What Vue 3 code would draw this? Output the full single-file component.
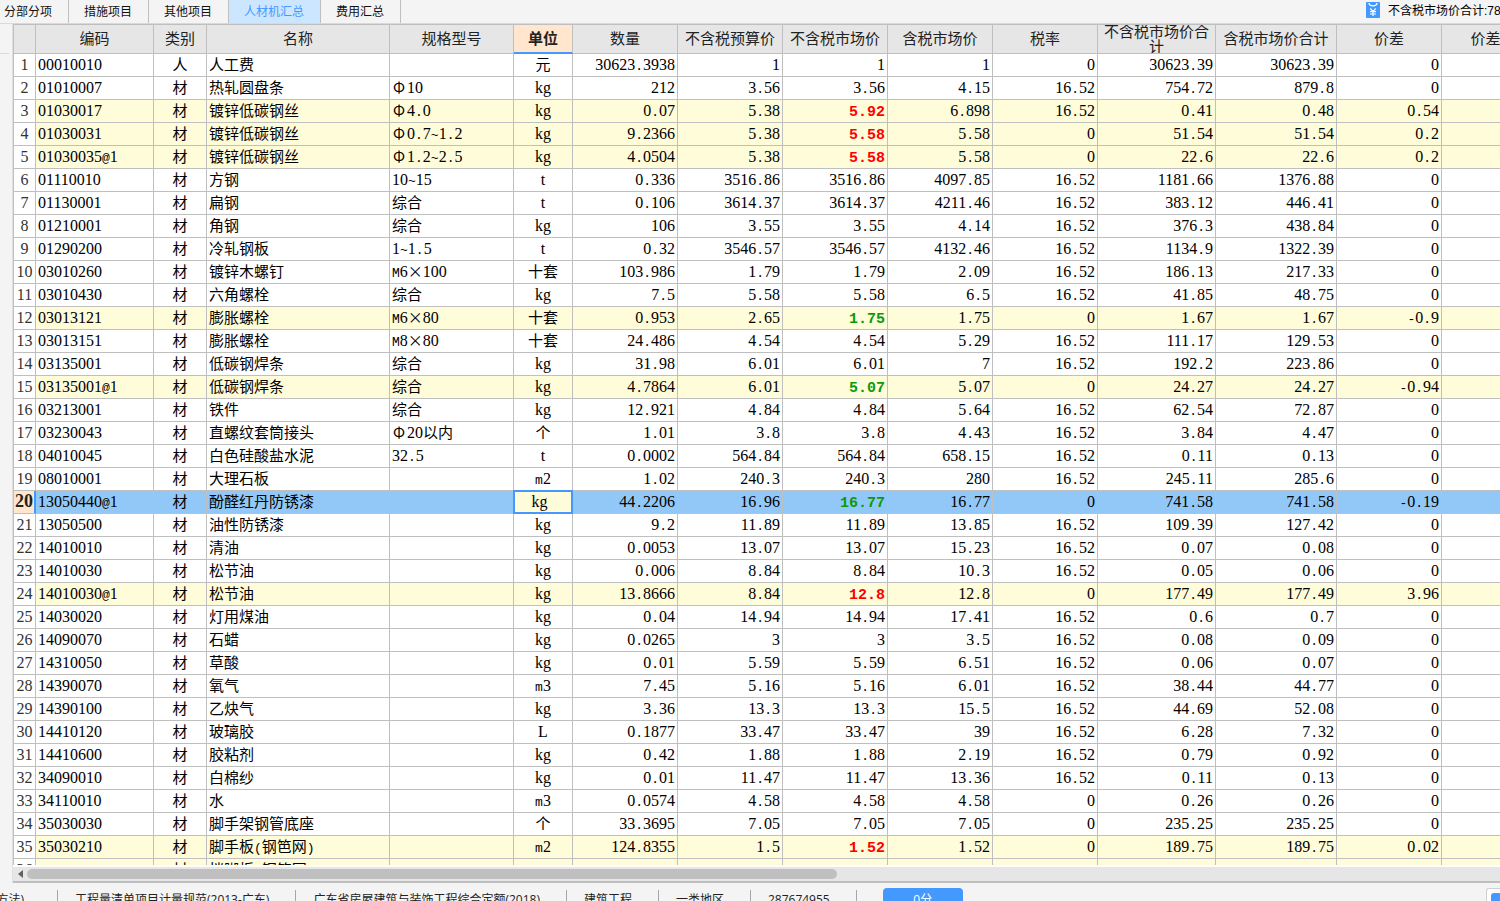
<script setup>
import { ref } from 'vue'

const tabs = ['分部分项', '措施项目', '其他项目', '人材机汇总', '费用汇总']
const activeTab = ref('人材机汇总')
const unit = ref('kg')

const columns = [
  { key: 'no', label: '', cls: 'c-no' },
  { key: 'code', label: '编码', cls: 'c-code' },
  { key: 'kind', label: '类别', cls: 'c-kind' },
  { key: 'name', label: '名称', cls: 'c-name' },
  { key: 'spec', label: '规格型号', cls: 'c-spec' },
  { key: 'unit', label: '单位', cls: 'c-unit' },
  { key: 'qty', label: '数量', cls: 'c-num' },
  { key: 'budget', label: '不含税预算价', cls: 'c-num' },
  { key: 'market', label: '不含税市场价', cls: 'c-num' },
  { key: 'taxed', label: '含税市场价', cls: 'c-num' },
  { key: 'rate', label: '税率', cls: 'c-num' },
  { key: 'total', label: '不含税市场价合计', cls: 'c-total' },
  { key: 'taxedTotal', label: '含税市场价合计', cls: 'c-taxed-total' },
  { key: 'diff', label: '价差', cls: 'c-num' },
  { key: 'diffTotal', label: '价差合计', cls: 'c-total' },
]

const source = `00010010|人|人工费||元|30623.3938|1|1|1|0|30623.39|30623.39|0
01010007|材|热轧圆盘条|Φ10|kg|212|3.56|3.56|4.15|16.52|754.72|879.8|0
01030017|材|镀锌低碳钢丝|Φ4.0|kg|0.07|5.38|5.92|6.898|16.52|0.41|0.48|0.54
01030031|材|镀锌低碳钢丝|Φ0.7~1.2|kg|9.2366|5.38|5.58|5.58|0|51.54|51.54|0.2
01030035@1|材|镀锌低碳钢丝|Φ1.2~2.5|kg|4.0504|5.38|5.58|5.58|0|22.6|22.6|0.2
01110010|材|方钢|10~15|t|0.336|3516.86|3516.86|4097.85|16.52|1181.66|1376.88|0
01130001|材|扁钢|综合|t|0.106|3614.37|3614.37|4211.46|16.52|383.12|446.41|0
01210001|材|角钢|综合|kg|106|3.55|3.55|4.14|16.52|376.3|438.84|0
01290200|材|冷轧钢板|1~1.5|t|0.32|3546.57|3546.57|4132.46|16.52|1134.9|1322.39|0
03010260|材|镀锌木螺钉|M6×100|十套|103.986|1.79|1.79|2.09|16.52|186.13|217.33|0
03010430|材|六角螺栓|综合|kg|7.5|5.58|5.58|6.5|16.52|41.85|48.75|0
03013121|材|膨胀螺栓|M6×80|十套|0.953|2.65|1.75|1.75|0|1.67|1.67|-0.9
03013151|材|膨胀螺栓|M8×80|十套|24.486|4.54|4.54|5.29|16.52|111.17|129.53|0
03135001|材|低碳钢焊条|综合|kg|31.98|6.01|6.01|7|16.52|192.2|223.86|0
03135001@1|材|低碳钢焊条|综合|kg|4.7864|6.01|5.07|5.07|0|24.27|24.27|-0.94
03213001|材|铁件|综合|kg|12.921|4.84|4.84|5.64|16.52|62.54|72.87|0
03230043|材|直螺纹套筒接头|Φ20以内|个|1.01|3.8|3.8|4.43|16.52|3.84|4.47|0
04010045|材|白色硅酸盐水泥|32.5|t|0.0002|564.84|564.84|658.15|16.52|0.11|0.13|0
08010001|材|大理石板||m2|1.02|240.3|240.3|280|16.52|245.11|285.6|0
13050440@1|材|酚醛红丹防锈漆||kg|44.2206|16.96|16.77|16.77|0|741.58|741.58|-0.19
13050500|材|油性防锈漆||kg|9.2|11.89|11.89|13.85|16.52|109.39|127.42|0
14010010|材|清油||kg|0.0053|13.07|13.07|15.23|16.52|0.07|0.08|0
14010030|材|松节油||kg|0.006|8.84|8.84|10.3|16.52|0.05|0.06|0
14010030@1|材|松节油||kg|13.8666|8.84|12.8|12.8|0|177.49|177.49|3.96
14030020|材|灯用煤油||kg|0.04|14.94|14.94|17.41|16.52|0.6|0.7|0
14090070|材|石蜡||kg|0.0265|3|3|3.5|16.52|0.08|0.09|0
14310050|材|草酸||kg|0.01|5.59|5.59|6.51|16.52|0.06|0.07|0
14390070|材|氧气||m3|7.45|5.16|5.16|6.01|16.52|38.44|44.77|0
14390100|材|乙炔气||kg|3.36|13.3|13.3|15.5|16.52|44.69|52.08|0
14410120|材|玻璃胶||L|0.1877|33.47|33.47|39|16.52|6.28|7.32|0
14410600|材|胶粘剂||kg|0.42|1.88|1.88|2.19|16.52|0.79|0.92|0
34090010|材|白棉纱||kg|0.01|11.47|11.47|13.36|16.52|0.11|0.13|0
34110010|材|水||m3|0.0574|4.58|4.58|4.58|0|0.26|0.26|0
35030030|材|脚手架钢管底座||个|33.3695|7.05|7.05|7.05|0|235.25|235.25|0
35030210|材|脚手板(钢笆网)||m2|124.8355|1.5|1.52|1.52|0|189.75|189.75|0.02
|材|挡脚板(钢笆网)||||||||||`

const dataKeys = columns.slice(1, -1).map((c) => c.key)
const rows = source.split('\n').map((line, i) => {
  const row = { no: String(i + 1), diffTotal: '' }
  line.split('|').forEach((value, k) => {
    row[dataKeys[k]] = value
  })
  row.changed = row.diff !== '0'
  row.current = i === 19
  return row
})

// Splits a value into runs so that digits, symbols and Han text each get their own face.
function runs(text) {
  const parts = text.match(/Φ|[.~@Mm()-]+|[0-9a-zA-Z]+|[^0-9a-zA-Z.~@()Φ-]+/g) || []
  return parts.map((t) => ({
    text: t,
    cls: t === 'Φ' ? 'phi' : /^[.~@Mm()-]/.test(t) ? 'sym' : /^[0-9a-zA-Z]/.test(t) ? 'num' : 'han',
  }))
}

function cellClass(col, row) {
  return [
    col.cls,
    {
      up: col.key === 'market' && Number(row.diff) > 0,
      down: col.key === 'market' && Number(row.diff) < 0,
      editing: col.key === 'unit' && row.current,
    },
  ]
}

const status = [
  '工程量清单项目计量规范(2013-广东)',
  '广东省房屋建筑与装饰工程综合定额(2018)',
  '建筑工程',
  '一类地区',
  '287674955',
]
</script>

<template>
  <div class="app">
    <header class="topbar">
      <nav class="tabs">
        <button
          v-for="t in tabs"
          :key="t"
          type="button"
          class="tab"
          :class="{ active: t === activeTab }"
          @click="activeTab = t"
        >{{ t }}</button>
      </nav>
      <div class="summary">
        <svg class="summary-icon" viewBox="0 0 14 16" aria-hidden="true">
          <rect width="14" height="16" rx="1" fill="#4499ff" />
          <path d="M3 1C3.4 4.8 10.6 4.8 11 1" fill="none" stroke="#fff" stroke-width="1.4" />
          <path d="M4.2 6.5L7 9.3L9.8 6.5M7 9.3V14M4 9.7h6M4 12h6" fill="none" stroke="#fff" stroke-width="1.2" />
        </svg>
        <span class="summary-text">不含税市场价合计:787143.26</span>
      </div>
    </header>

    <main class="body">
      <aside class="rail"><div class="rail-head"></div></aside>
      <section class="panel">
        <div class="grid">
          <table>
            <colgroup>
              <col v-for="c in columns" :key="c.key" :class="c.cls" />
            </colgroup>
            <thead>
              <tr>
                <th v-for="c in columns" :key="c.key" scope="col" :class="{ picked: c.key === 'unit' }">
                  <div class="th-text">{{ c.label }}</div>
                </th>
              </tr>
            </thead>
            <tbody>
              <tr v-for="row in rows" :key="row.no" :class="{ changed: row.changed, current: row.current }">
                <td v-for="c in columns" :key="c.key" :class="cellClass(c, row)">
                  <input v-if="c.key === 'unit' && row.current" v-model="unit" class="editor" type="text" aria-label="单位" />
                  <div v-else class="cell"><span v-for="(r, k) in runs(row[c.key])" :key="k" :class="r.cls">{{ r.text }}</span></div>
                </td>
              </tr>
            </tbody>
          </table>
        </div>
        <div class="scroll">
          <svg class="scroll-arrow" viewBox="0 0 5 8" aria-hidden="true"><path d="M5 0v8L0 4z" fill="#606060" /></svg>
          <div class="track"><div class="thumb"></div></div>
        </div>
      </section>
    </main>

    <footer class="status">
      <span class="item lead">方法)</span>
      <span v-for="s in status" :key="s" class="item">{{ s }}</span>
      <button type="button" class="score">0分</button>
      <div class="chat"><div class="chat-mark"></div></div>
    </footer>
  </div>
</template>

<style>
body {
  margin: 0;
  overflow: hidden;
}
</style>

<style scoped>
.app {
  display: flex;
  flex-direction: column;
  height: 100vh;
  overflow: hidden;
  background: #f4f4f4;
  color: #000;
  font-family: "Open Sans", "Noto Sans CJK SC", sans-serif;
  font-size: 12px;
}
.topbar {
  display: flex;
  flex: none;
  justify-content: space-between;
  height: 23px;
  border-bottom: 1px solid #d9d9d9;
}
.tabs {
  display: flex;
}
.tab {
  box-sizing: border-box;
  height: 23px;
  padding: 1px 16px 0 15px;
  border: 0;
  border-right: 1px solid #bfbfbf;
  background: transparent;
  color: #111;
  font: inherit;
  line-height: 22px;
}
.tab:first-child {
  padding-left: 4px;
}
.tab.active {
  padding-top: 0;
  background: #cce6ff;
  color: #4499ff;
}
.summary {
  display: flex;
  gap: 8px;
  width: 134px;
  overflow: hidden;
  white-space: nowrap;
  line-height: 23px;
  font-family: "Liberation Sans", "Noto Sans CJK SC", sans-serif;
}
.summary-icon {
  flex: none;
  width: 14px;
  height: 16px;
  margin-top: 2px;
}
.body {
  display: flex;
  flex: 1;
  min-height: 0;
}
.rail {
  flex: none;
  width: 12px;
  border-right: 1px solid #e0e0e0;
}
.rail-head {
  width: 9px;
  height: 29px;
  border-bottom: 1px solid #d9d9d9;
}
.panel {
  display: flex;
  flex: 1;
  flex-direction: column;
  min-width: 0;
  background: #fff;
  border-bottom: 2px solid #bfbfbf;
}
.grid {
  flex: 1;
  min-height: 0;
  overflow: hidden;
  margin-bottom: 2px;
  border-top: 1px solid #bfbfbf;
  border-left: 1px solid #bfbfbf;
}
table {
  table-layout: fixed;
  width: 1529px;
  border-collapse: separate;
  border-spacing: 0;
  font-size: 15px;
}
col.c-no { width: 22px; }
col.c-code { width: 118px; }
col.c-kind { width: 53px; }
col.c-name { width: 183px; }
col.c-spec { width: 124px; }
col.c-unit { width: 59px; }
col.c-num { width: 105px; }
col.c-total { width: 118px; }
col.c-taxed-total { width: 121px; }
th,
td {
  box-sizing: border-box;
  padding: 0;
  border-right: 1px solid #bfbfbf;
  border-bottom: 1px solid #bfbfbf;
}
th {
  height: 29px;
  background: #e6e6e6;
  color: #222;
  font-family: "Noto Sans CJK SC", sans-serif;
  font-weight: 400;
}
.th-text {
  display: flex;
  align-items: center;
  justify-content: center;
  box-sizing: border-box;
  height: 28px;
  overflow: hidden;
  padding: 0 5px 3px;
  line-height: 15px;
}
th.picked {
  background: #ffe6cc;
  border-bottom: 2px solid #4499ff;
  font-weight: 700;
}
th.picked .th-text {
  height: 27px;
}
td {
  height: 23px;
  text-align: right;
}
.cell {
  height: 22px;
  padding: 0 2px;
  overflow: hidden;
  white-space: nowrap;
  line-height: 20px;
}
.num {
  font-family: "Liberation Serif", serif;
  font-size: 16px;
}
.sym {
  font-family: "Liberation Mono", monospace;
  font-size: 13px;
}
.han,
.phi {
  font-family: "Noto Sans CJK SC", sans-serif;
  font-weight: 400;
}
.phi {
  padding: 0 2px 0 1px;
}
.c-code,
.c-name,
.c-spec {
  text-align: left;
}
.c-no,
.c-kind,
.c-unit {
  text-align: center;
}
.c-no .cell {
  padding: 0;
  color: #333;
}
.changed td:not(.c-no) {
  background: #fffcd9;
}
.current td:not(.c-no) {
  background: #92c8f8;
}
.current .c-no {
  background: #ffe6cc;
  border-right: 2px solid #4499ff;
}
.current .c-no .num {
  color: #222;
  font-size: 18px;
  font-weight: 700;
}
.up,
.down {
  color: #f00;
  font-weight: 700;
}
.down {
  color: #0a9a0a;
}
.up span,
.down span {
  font-family: "Liberation Mono", monospace;
  font-size: 15px;
}
.editing {
  position: relative;
}
.editor {
  position: absolute;
  inset: -1px;
  box-sizing: border-box;
  width: calc(100% + 2px);
  padding: 0 7px 0 0;
  border: 2px solid #4499ff;
  background: #fffcd9;
  color: #000;
  font-family: "Liberation Serif", serif;
  font-size: 16px;
  text-align: center;
  outline: 0;
}
.scroll {
  display: flex;
  flex: none;
  align-items: center;
  gap: 4px;
  height: 14px;
  padding: 0 0 0 5px;
  background: #e6e6e6;
}
.scroll-arrow {
  width: 5px;
  height: 8px;
}
.track {
  flex: 1;
}
.thumb {
  width: 55%;
  height: 10px;
  border-radius: 5px;
  background: #bfbfbf;
}
.status {
  display: flex;
  flex: none;
  align-items: flex-start;
  box-sizing: border-box;
  height: 18px;
  padding-top: 5px;
  overflow: hidden;
  white-space: nowrap;
  color: #222;
}
.item {
  flex: none;
  height: 20px;
  margin-top: 2px;
  padding: 0 26px 0 17px;
  border-right: 1px solid #a0a8b4;
  line-height: 20px;
}
.item.lead {
  display: flex;
  justify-content: flex-end;
  width: 24px;
  padding: 0 33px 0 0;
}
.score {
  flex: none;
  width: 80px;
  height: 24px;
  margin-left: 26px;
  padding: 0;
  border: 0;
  border-radius: 4px;
  background: #4499ff;
  color: #fff;
  font: inherit;
  line-height: 20px;
}
.chat {
  flex: none;
  width: 14px;
  height: 24px;
  margin-left: auto;
  box-sizing: border-box;
  padding: 4px 0 0 4px;
  border: 1px solid #d0d0d0;
  border-right: 0;
  border-radius: 3px 0 0 0;
  background: #fff;
}
.chat-mark {
  height: 12px;
  border-radius: 3px 0 0 3px;
  background: #4499ff;
}
</style>
